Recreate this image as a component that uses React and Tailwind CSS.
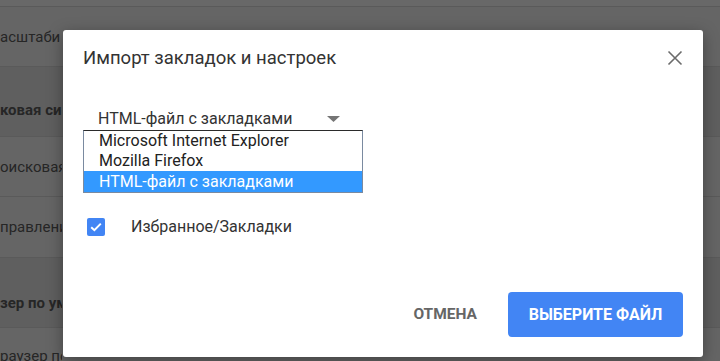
import React from "react";

const rows = [
  { h: 7, text: "", bold: false, shade: "bg-[#686868]", pad: "" },
  { h: 60, text: "асштаби", bold: false, shade: "bg-[#656565]", pad: "items-center" },
  { h: 70, text: "ковая си", bold: true, shade: "bg-[#5f5f5f]", pad: "items-center pt-[17px]" },
  { h: 60, text: "оисковая", bold: false, shade: "bg-[#656565]", pad: "items-center" },
  { h: 61, text: "правлени", bold: false, shade: "bg-[#656565]", pad: "items-center" },
  { h: 70, text: "зер по ум", bold: true, shade: "bg-[#5f5f5f]", pad: "items-center pt-[20px]" },
  { h: 40, text: "раузер по умолчанию", bold: false, shade: "bg-[#656565]", pad: "items-start pt-[19px]" },
];

export default function App() {
  return (
    <div
      className="relative w-[720px] h-[361px] overflow-hidden bg-[#666666]"
      style={{ fontFamily: "Roboto, 'Noto Sans', Arial, sans-serif" }}
    >
      {/* darkened background page */}
      <div className="flex flex-col">
        {rows.map((r, i) => (
          <div
            key={i}
            className={`flex border-b border-[#5a5a5a] ${r.shade} ${r.pad} text-[15px] text-[#262626] ${r.bold ? "font-bold" : "font-normal"}`}
            style={{ height: r.h }}
          >
            <span className="w-[62px] overflow-hidden whitespace-nowrap leading-[18px]">{r.text}</span>
          </div>
        ))}
      </div>

      {/* dialog */}
      <div className="absolute left-[63px] top-[30px] w-[640px] h-[327px] rounded-[3px] bg-white shadow-[0_4px_16px_rgba(0,0,0,0.35)] flex flex-col px-[20px] pt-[16px] pb-[20px]">
        <div className="h-[24px] text-[18.5px] leading-[24px] text-[#333333]">
          Импорт закладок и настроек
        </div>
        <button className="absolute right-[20px] top-[20px] w-[16px] h-[16px] text-[#6b6b6b]" aria-label="close">
          <svg viewBox="0 0 16 16" width="16" height="16">
            <path d="M1.5 1.5 L14.5 14.5 M14.5 1.5 L1.5 14.5" stroke="currentColor" strokeWidth="1.6" fill="none" />
          </svg>
        </button>

        {/* select */}
        <div className="mt-[37px] w-[280px]">
          <div className="flex items-center justify-between h-[23px] pl-[15px] pr-[23px] text-[16px] text-[#333333]">
            <span>HTML-файл с закладками</span>
            <svg width="13" height="6" viewBox="0 0 13 6">
              <path d="M0 0 L13 0 L6.5 6 Z" fill="#757575" />
            </svg>
          </div>
          <div className="border border-[#7a8aa0] border-t-[#2b2b2b] text-[16px] text-[#222222]">
            <div className="h-[20px] leading-[20px] pl-[15px]">Microsoft Internet Explorer</div>
            <div className="h-[20px] leading-[20px] pl-[15px]">Mozilla Firefox</div>
            <div className="h-[21px] leading-[21px] pl-[15px] bg-[#3399ff] text-white">HTML-файл с закладками</div>
          </div>
        </div>

        {/* checkbox */}
        <div className="mt-[24px] flex items-center h-[20px]">
          <div className="ml-[4px] w-[18px] h-[18px] rounded-[2px] bg-[#4285f4] flex items-center justify-center">
            <svg width="12" height="10" viewBox="0 0 12 10">
              <path d="M1.2 5.2 L4.4 8.2 L10.8 1.6" stroke="white" strokeWidth="2" fill="none" />
            </svg>
          </div>
          <span className="ml-[26px] text-[16px] text-[#333333]">Избранное/Закладки</span>
        </div>

        {/* buttons */}
        <div className="mt-auto flex justify-end items-center gap-[15px]">
          <button className="h-[45px] px-[16px] text-[15.5px] font-bold text-[#666666]">
            ОТМЕНА
          </button>
          <button className="h-[45px] w-[175px] rounded-[4px] bg-[#4285f4] text-[16px] font-bold text-white">
            ВЫБЕРИТЕ ФАЙЛ
          </button>
        </div>
      </div>
    </div>
  );
}
